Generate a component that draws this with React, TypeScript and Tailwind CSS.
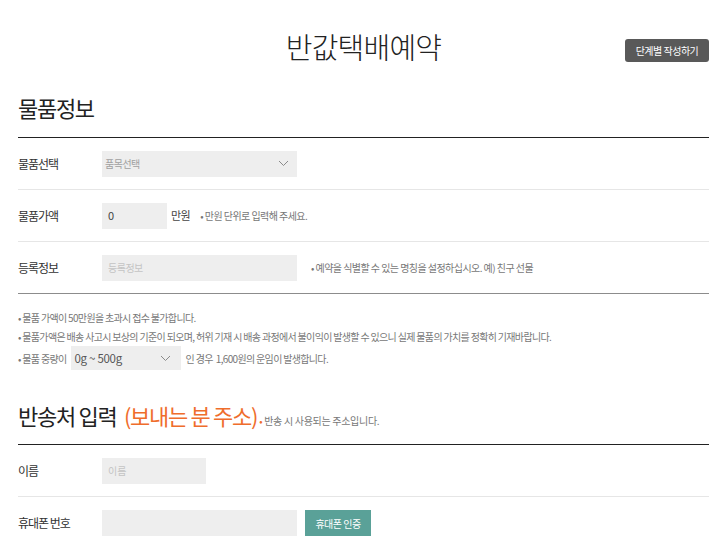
import React from "react";

const font = {
  fontFamily: '"Noto Sans CJK KR", "Noto Sans", sans-serif',
};

function Chevron() {
  return (
    <svg width="11" height="7" viewBox="0 0 11 7" fill="none" className="shrink-0">
      <polyline points="1,1 5.5,5.5 10,1" stroke="#8a8a8a" strokeWidth="1" />
    </svg>
  );
}

function Row({
  label,
  children,
  last,
}: {
  label: string;
  children: React.ReactNode;
  last?: boolean;
}) {
  return (
    <div
      className={`flex h-[52px] items-center border-b ${
        last ? "border-[#8c8c8c]" : "border-[#e6e6e6]"
      }`}
    >
      <div className="w-[84px] text-[12px] tracking-[-1px] text-[#333]">{label}</div>
      {children}
    </div>
  );
}

export default function App() {
  return (
    <div style={font} className="h-[537px] w-[720px] overflow-hidden bg-white pl-[18px] pr-[11px]">
      <div className="relative h-[93px]">
        <h1 className="pt-[26px] text-center text-[29px] font-light leading-[40px] tracking-[-0.8px] text-[#222]">
          반값택배예약
        </h1>
        <button
          type="button"
          className="absolute right-0 top-[39px] h-[23px] w-[84px] rounded-[3px] bg-[#595959] text-[10px] tracking-[-0.5px] text-white"
        >
          단계별 작성하기
        </button>
      </div>

      <h2 className="text-[22px] leading-[28px] tracking-[-1.3px] text-[#222]">물품정보</h2>

      <div className="mt-[16px] border-t border-[#222]">
        <Row label="물품선택">
          <div className="flex h-[26px] w-[195px] items-center justify-between bg-[#eeeeee] pl-[3px] pr-[8px]">
            <span className="text-[10px] tracking-[-0.5px] text-[#a0a0a0]">품목선택</span>
            <Chevron />
          </div>
        </Row>
        <Row label="물품가액">
          <div className="flex h-[26px] w-[65px] items-center bg-[#eeeeee] pl-[6px] text-[11px] text-[#444]">
            0
          </div>
          <span className="ml-[4px] text-[11px] tracking-[-0.5px] text-[#444]">만원</span>
          <span className="ml-[10px] text-[10px] tracking-[-0.55px] text-[#777]">
            • 만원 단위로 입력해 주세요.
          </span>
        </Row>
        <Row label="등록정보" last>
          <div className="flex h-[26px] w-[195px] items-center bg-[#eeeeee] pl-[6px] text-[10px] tracking-[-0.5px] text-[#c4c4c4]">
            등록정보
          </div>
          <span className="ml-[14px] text-[10px] tracking-[-0.55px] text-[#777]">
            • 예약을 식별할 수 있는 명칭을 설정하십시오. 예) 친구 선물
          </span>
        </Row>
      </div>

      <div className="mt-[14px] text-[10px] leading-[19px] tracking-[-0.67px] text-[#777]">
        <p>• 물품 가액이 50만원을 초과시 접수 불가합니다.</p>
        <p>
          • 물품가액은 배송 사고시 보상의 기준이 되오며, 허위 기재 시 배송 과정에서 불이익이 발생할 수 있으니 실제
          물품의 가치를 정확히 기재바랍니다.
        </p>
        <div className="flex h-[24px] items-center">
          <span>• 물품 중량이</span>
          <div className="ml-[4px] flex h-[24px] w-[110px] items-center justify-between bg-[#eeeeee] pl-[4px] pr-[10px]">
            <span className="text-[11.5px] tracking-[-0.3px] text-[#555]">0g ~ 500g</span>
            <Chevron />
          </div>
          <span className="ml-[5px]">인 경우 &nbsp;1,600원의 운임이 발생합니다.</span>
        </div>
      </div>

      <h2 className="mt-[31px] h-[28px] whitespace-nowrap text-[22px] leading-[28px] tracking-[-1.3px] text-[#222]">
        반송처 입력 <span className="ml-[4px] text-[#ef6d2c]">(보내는 분 주소)</span>
        <span className="ml-[2px] text-[10px] tracking-[-0.3px] text-[#777]">
          <span className="text-[#ef6d2c]">•</span> 반송 시 사용되는 주소입니다.
        </span>
      </h2>

      <div className="mt-[15px] border-t border-[#222]">
        <Row label="이름">
          <div className="flex h-[26px] w-[104px] items-center bg-[#eeeeee] pl-[6px] text-[10px] text-[#c4c4c4]">
            이름
          </div>
        </Row>
        <div className="flex h-[52px] items-center">
          <div className="w-[84px] text-[12px] tracking-[-1px] text-[#333]">휴대폰 번호</div>
          <div className="h-[26px] w-[195px] bg-[#eeeeee]" />
          <button
            type="button"
            className="ml-[8px] h-[26px] w-[66px] bg-[#5aa198] text-[10px] tracking-[-0.5px] text-white"
          >
            휴대폰 인증
          </button>
        </div>
      </div>
    </div>
  );
}
